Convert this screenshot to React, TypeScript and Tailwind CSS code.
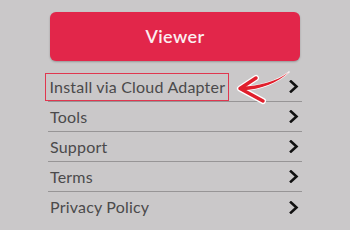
import React from "react";

const Chevron = () => (
  <svg width="10" height="13" viewBox="0 0 10 13" className="shrink-0">
    <path d="M2 1.5 L7.5 6.5 L2 11.5" fill="none" stroke="#111" strokeWidth="2.6" strokeLinecap="square" strokeLinejoin="miter" />
  </svg>
);

const Row = ({ label, boxed }: { label: string; boxed?: boolean }) => (
  <div className="flex h-[30px] items-center justify-between border-b-[1.5px] border-[#979596] pl-[2px] pr-[3px]">
    {boxed ? (
      <span className="-ml-[5px] flex h-[28px] w-[184px] items-center border-[1.5px] border-[#e0374f] pl-[3.5px]">{label}</span>
    ) : (
      <span>{label}</span>
    )}
    <Chevron />
  </div>
);

export default function App() {
  return (
    <div
      className="relative h-[230px] w-[350px] overflow-hidden bg-[#cac8c9] text-[#4b4a4b]"
      style={{ fontFamily: "Lato, 'Open Sans', sans-serif" }}
    >
      <div className="flex flex-col pt-[12px]">
        <div className="mx-[50px] flex h-[49px] items-center justify-center rounded-[6px] bg-[#e2264a] text-[18px] font-semibold tracking-[0.4px] text-[#fbeef0] shadow-[0_1px_2px_rgba(0,0,0,0.25)]">
          Viewer
        </div>
        <div className="mx-[48px] mt-[11px] flex flex-col text-[16px] tracking-[0.2px]">
          <Row label="Install via Cloud Adapter" boxed />
          <Row label="Tools" />
          <Row label="Support" />
          <Row label="Terms" />
          <div className="flex h-[30px] items-center justify-between pl-[2px] pr-[3px]">
            <span>Privacy Policy</span>
            <Chevron />
          </div>
        </div>
      </div>
      <svg className="absolute left-0 top-0" width="350" height="230" viewBox="0 0 350 230">
        <g strokeLinejoin="round" strokeLinecap="round">
          <path
            d="M289 72 C276 82 259 86 242 86.5 L242 90.5 C261 89.5 277 83 289 72 Z"
            fill="#e01f2c"
            stroke="#fff"
            strokeWidth="1.5"
          />
          <path d="M256 78 L240 88.5 L263 101" fill="none" stroke="#fff" strokeWidth="6" />
          <path d="M256 78 L240 88.5 L263 101" fill="none" stroke="#e01f2c" strokeWidth="3.5" />
          <path
            d="M289 72 C276 82 259 86 242 86.5 L242 90.5 C261 89.5 277 83 289 72 Z"
            fill="#e01f2c"
          />
        </g>
      </svg>
    </div>
  );
}
